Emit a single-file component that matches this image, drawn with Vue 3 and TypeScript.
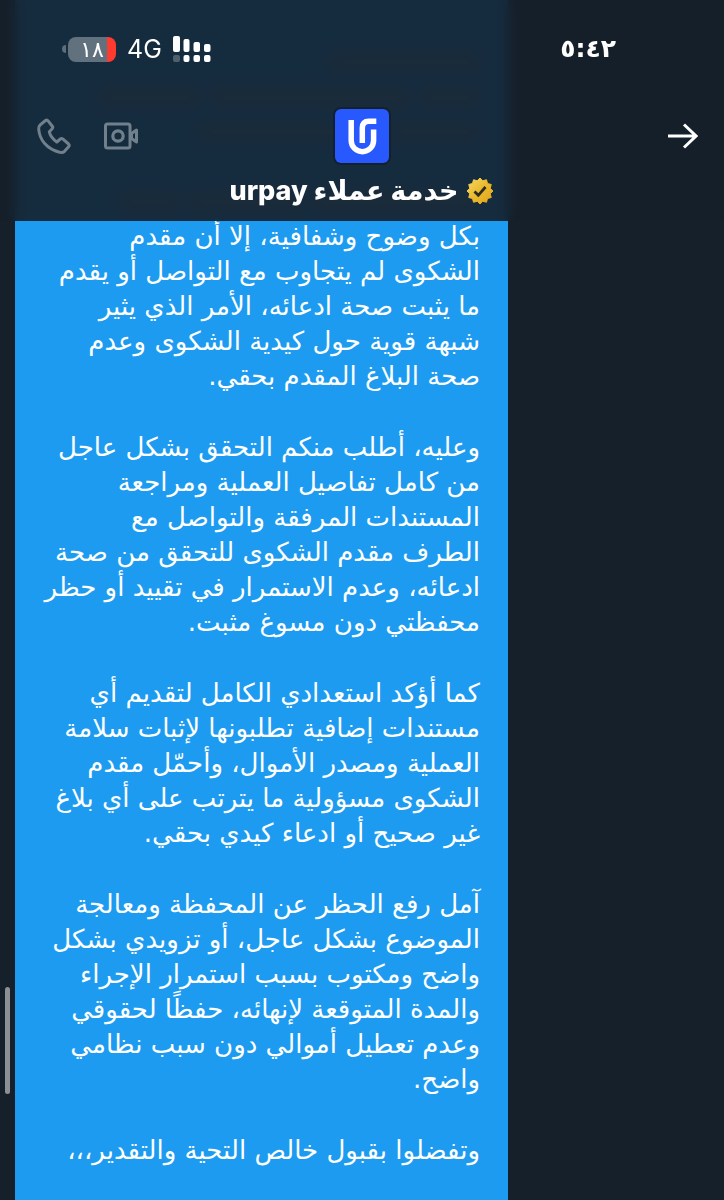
<script setup lang="ts">
interface Paragraph {
  id: number
  text: string
}

const contactName = 'خدمة عملاء urpay'
const clock = '٥:٤٢'
const batteryLevel = '١٨'
const network = '4G'

const earlierLines: number[][] = [
  [150],
  [60, 200, 100],
  [90, 180],
  [],
  [170, 110, 60],
]

const paragraphs: Paragraph[] = [
  {
    id: 1,
    text: `بكل وضوح وشفافية، إلا أن مقدم
الشكوى لم يتجاوب مع التواصل أو يقدم
ما يثبت صحة ادعائه، الأمر الذي يثير
شبهة قوية حول كيدية الشكوى وعدم
صحة البلاغ المقدم بحقي.`,
  },
  {
    id: 2,
    text: `وعليه، أطلب منكم التحقق بشكل عاجل
من كامل تفاصيل العملية ومراجعة
المستندات المرفقة والتواصل مع
الطرف مقدم الشكوى للتحقق من صحة
ادعائه، وعدم الاستمرار في تقييد أو حظر
محفظتي دون مسوغ مثبت.`,
  },
  {
    id: 3,
    text: `كما أؤكد استعدادي الكامل لتقديم أي
مستندات إضافية تطلبونها لإثبات سلامة
العملية ومصدر الأموال، وأحمّل مقدم
الشكوى مسؤولية ما يترتب على أي بلاغ
غير صحيح أو ادعاء كيدي بحقي.`,
  },
  {
    id: 4,
    text: `آمل رفع الحظر عن المحفظة ومعالجة
الموضوع بشكل عاجل، أو تزويدي بشكل
واضح ومكتوب بسبب استمرار الإجراء
والمدة المتوقعة لإنهائه، حفظًا لحقوقي
وعدم تعطيل أموالي دون سبب نظامي
واضح.`,
  },
  { id: 5, text: 'وتفضلوا بقبول خالص التحية والتقدير،،،' },
]

function badgePoints(count: number, outer: number, inner: number): string {
  return Array.from({ length: count * 2 }, (_, i) => {
    const radius = i % 2 === 0 ? outer : inner
    const angle = (Math.PI * i) / count - Math.PI / 2
    return `${(14 + radius * Math.cos(angle)).toFixed(2)},${(14 + radius * Math.sin(angle)).toFixed(2)}`
  }).join(' ')
}

const badge = badgePoints(12, 13, 10.6)
</script>

<template>
  <div class="chat">
    <header class="header">
      <div class="status">
        <div class="status-left">
          <div class="battery">
            <span class="battery-tip"></span>
            <span class="battery-body">{{ batteryLevel }}</span>
          </div>
          <span class="network">{{ network }}</span>
          <svg class="signal" width="38" height="26" viewBox="0 0 38 26" fill="#fff" aria-hidden="true">
            <rect x="0" y="0" width="7" height="16" rx="2" />
            <rect x="10.500" y="3" width="6" height="13" rx="2" />
            <rect x="20.500" y="6" width="6.500" height="10" rx="2" />
            <rect x="31" y="8" width="6.500" height="8" rx="2" />
            <rect x="0" y="19" width="7" height="7" rx="2" opacity=".25" />
            <rect x="10.500" y="19" width="6" height="7" rx="2" />
            <rect x="20.500" y="19" width="6.500" height="7" rx="2" />
            <rect x="31" y="19" width="6.500" height="7" rx="2" />
          </svg>
        </div>
        <time class="clock">{{ clock }}</time>
      </div>

      <div class="toolbar">
        <div class="actions">
          <button class="icon-button" type="button" aria-label="مكالمة صوتية">
            <svg width="36" height="38" viewBox="0 0 36 38" fill="none" stroke="#71808d" stroke-width="3" stroke-linejoin="round">
              <path d="M9.500 3.500Q11 2.500 12.300 4.200L16.300 9.200Q17.300 10.700 16 12L13.300 14.800Q14.300 20.200 20.800 25L24.300 22Q25.600 21 27 22.200L32.600 27Q33.800 28.300 32.600 29.800L28.500 34.300Q26.500 36.200 23.500 35.200C11 32.200 3.500 23 2.700 12Q2.400 9.500 4.200 7.800Z" />
            </svg>
          </button>
          <button class="icon-button" type="button" aria-label="مكالمة فيديو">
            <svg width="36" height="28" viewBox="0 0 36 28" fill="none" stroke="#71808d" stroke-width="3" stroke-linejoin="round">
              <rect x="2.500" y="2" width="24.500" height="24" rx="2" />
              <circle cx="15" cy="14" r="5.200" stroke-width="3.200" />
              <path d="M28.500 11.500L33.500 8V20L28.500 16.500Z" />
            </svg>
          </button>
        </div>
        <div class="avatar" role="img" aria-label="urpay">
          <svg width="54" height="54" viewBox="0 0 54 54" fill="none" stroke="#fff" stroke-width="5.500">
            <path d="M16.200 11V31.500A11.200 11.200 0 0 0 38.600 31.500V20.500" />
            <path d="M27.300 34V19Q27.300 12.200 34 12.200H41.300" />
          </svg>
        </div>
        <button class="icon-button back" type="button" aria-label="رجوع">
          <svg width="30" height="26" viewBox="0 0 30 26" fill="none" stroke="#fff" stroke-width="3">
            <path d="M0 13H28M16 1.500L28 13L16 24.500" />
          </svg>
        </button>
      </div>

      <h1 class="title" dir="rtl">
        <svg width="28" height="28" viewBox="0 0 28 28" role="img" aria-label="موثق">
          <defs>
            <linearGradient id="gold" x1="0" y1="0" x2="1" y2="1">
              <stop offset="0" stop-color="#f8d766" />
              <stop offset=".5" stop-color="#e9b92d" />
              <stop offset="1" stop-color="#e3a51c" />
            </linearGradient>
          </defs>
          <polygon :points="badge" fill="url(#gold)" stroke="url(#gold)" stroke-width="1" stroke-linejoin="round" />
          <path d="M8.500 14.500L12.300 18.300L19.500 10" fill="none" stroke="#2c2b24" stroke-width="2.800" />
        </svg>
        <span>{{ contactName }}</span>
      </h1>
    </header>

    <main class="thread">
      <article class="bubble" dir="rtl">
        <div class="earlier" aria-hidden="true">
          <div v-for="(line, row) in earlierLines" :key="row" class="earlier-line">
            <span v-for="(width, i) in line" :key="i" :style="{ width: width + 'px' }"></span>
          </div>
        </div>
        <p v-for="p in paragraphs" :key="p.id">{{ p.text }}</p>
      </article>
    </main>
    <span class="scrollbar"></span>
  </div>
</template>

<style>
body {
  background: #16202a;
}
</style>

<style scoped>
.chat {
  position: relative;
  min-height: 100vh;
  overflow: hidden;
  background: #16202a;
  color: #fff;
  font-family: Inter, "Noto Sans", "DejaVu Sans", sans-serif;
}

.header {
  position: absolute;
  z-index: 1;
  top: 0;
  left: 0;
  right: 0;
  box-sizing: border-box;
  height: 221px;
  padding-top: 34px;
  background: rgba(21, 31, 42, 0.9);
  backdrop-filter: blur(6px);
}

.status {
  display: flex;
  align-items: center;
  justify-content: space-between;
  height: 30px;
  padding: 0 108px 0 62px;
}

.status-left,
.battery {
  display: flex;
  align-items: center;
}

.status-left {
  gap: 11px;
}

.battery {
  gap: 2px;
}

.battery-tip {
  width: 4px;
  height: 8px;
  border-radius: 4px 0 0 4px;
  background: #5d6d7a;
}

.battery-body {
  box-sizing: border-box;
  width: 48px;
  height: 25px;
  border-radius: 8px;
  background: linear-gradient(to left, #ff3b30 9px, #61717e 9px);
  font: 400 22px/25px "DejaVu Sans", sans-serif;
  text-align: center;
}

.network {
  font-size: 25px;
  line-height: 32px;
}

.clock {
  font: 700 25px/30px "DejaVu Sans", sans-serif;
  direction: ltr;
  unicode-bidi: bidi-override;
}

.toolbar {
  display: grid;
  grid-template-columns: 1fr auto 1fr;
  align-items: center;
  margin-top: 45px;
  padding: 0 26px;
}

.actions {
  display: flex;
  align-items: center;
  gap: 31px;
  padding-left: 10px;
}

.icon-button {
  display: flex;
  padding: 0;
  border: 0;
  background: none;
  cursor: pointer;
}

.back {
  justify-self: end;
}

.avatar {
  display: flex;
  border-radius: 6px;
  background: #2859ff;
  box-shadow: 0 0 0 2px #15202d;
}

.title {
  display: flex;
  align-items: center;
  justify-content: center;
  gap: 8px;
  margin: 10px 0 0;
  font-size: 27px;
  font-weight: 800;
  line-height: 36px;
}

.thread {
  padding: 0 216px 0 15px;
}

.bubble {
  box-sizing: border-box;
  min-height: 100vh;
  padding: 44px 28px 31px;
  background: #1d9bf0;
  font-family: "DejaVu Sans", sans-serif;
  font-size: 26px;
  line-height: 35px;
}

.bubble p {
  margin: 0 0 36px;
  white-space: pre;
}

.bubble p:last-child {
  margin-bottom: 0;
}

.earlier {
  height: 175px;
}

.earlier-line {
  display: flex;
  align-items: center;
  gap: 10px;
  height: 35px;
}

.earlier-line span {
  height: 18px;
  border-radius: 6px;
  background: #4a98c0;
}

.scrollbar {
  position: absolute;
  left: 5px;
  top: 987px;
  width: 5px;
  height: 107px;
  border-radius: 3px;
  background: #8b9094;
}
</style>
